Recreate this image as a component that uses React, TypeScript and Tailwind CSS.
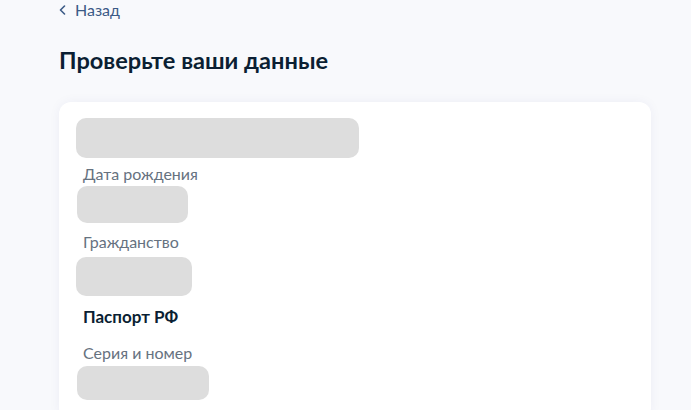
import React from "react";

function Skeleton({ className }: { className: string }) {
  return <div className={`bg-[#dddddd] rounded-[10px] ${className}`} />;
}

export default function App() {
  return (
    <div className="min-h-[410px] bg-[#f8f9fc] font-['Lato','Noto_Sans',sans-serif] overflow-hidden">
      <div className="pl-[59px] pr-[40px]">
        <button className="flex items-center gap-[9px] pt-[1px] text-[16px] leading-[18px] text-[#3b5a86]">
          <svg width="7" height="10" viewBox="0 0 7 10" fill="none">
            <path d="M5.5 1L1.5 5L5.5 9" stroke="#3b5a86" strokeWidth="1.6" strokeLinecap="round" strokeLinejoin="round" />
          </svg>
          Назад
        </button>

        <h1 className="mt-[25px] text-[23.6px] leading-[32px] font-bold text-[#0b1f33]">
          Проверьте ваши данные
        </h1>

        <div className="mt-[26px] w-[592px] rounded-[12px] bg-white shadow-[0_0_12px_rgba(0,40,120,0.05)] pl-[17px] pt-[16px] pb-[20px]">
          <div className="flex flex-col items-start">
            <Skeleton className="w-[283px] h-[40px]" />
            <div className="mt-[6px] pl-[7px] text-[16px] leading-[20px] text-[#66727f]">Дата рождения</div>
            <Skeleton className="mt-[2px] ml-[1px] w-[111px] h-[37px]" />
            <div className="mt-[9px] pl-[7px] text-[16px] leading-[20px] text-[#66727f]">Гражданство</div>
            <Skeleton className="mt-[5px] w-[116px] h-[39px]" />
            <div className="mt-[10px] pl-[7px] text-[17px] leading-[21px] font-bold text-[#0b1f33]">Паспорт РФ</div>
            <div className="mt-[16px] pl-[7px] text-[16px] leading-[20px] text-[#66727f]">Серия и номер</div>
            <Skeleton className="mt-[3px] ml-[1px] w-[132px] h-[34px]" />
          </div>
        </div>
      </div>
    </div>
  );
}
